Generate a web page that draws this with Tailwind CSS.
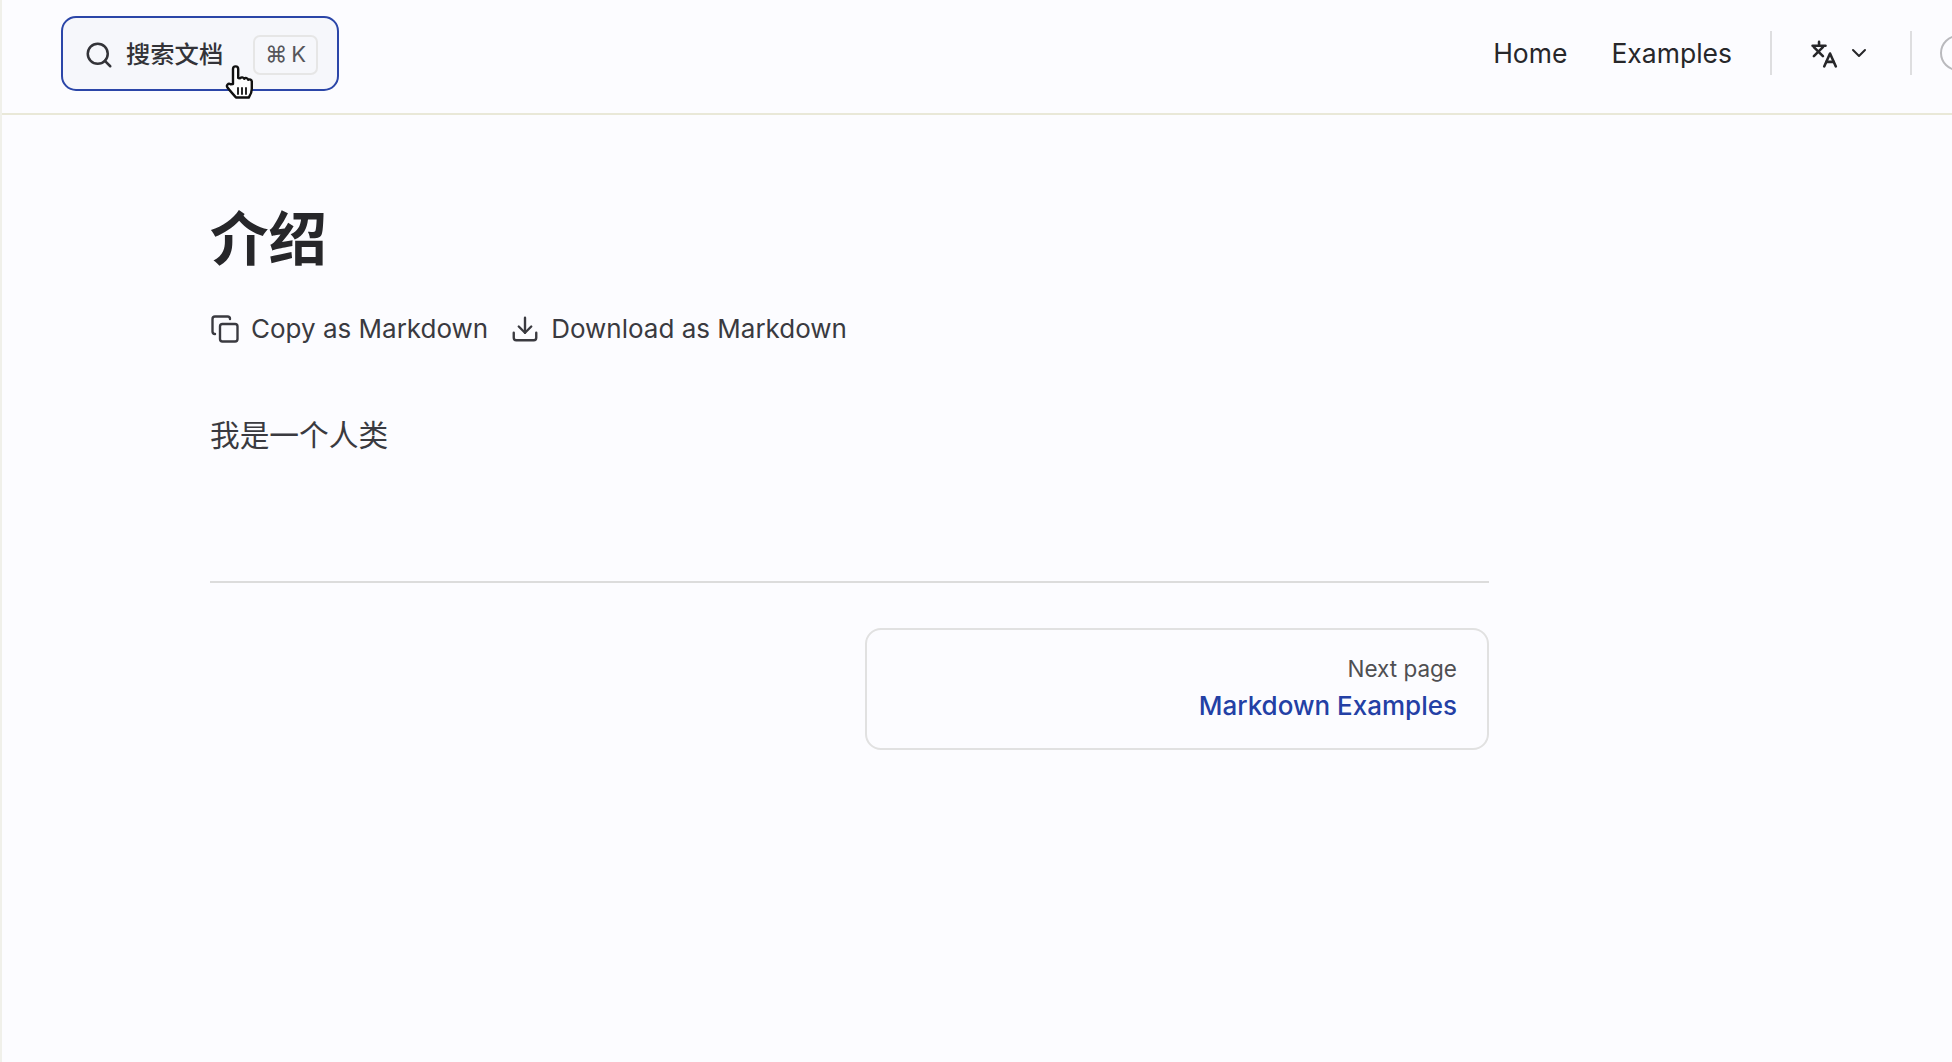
<!DOCTYPE html>
<html lang="en">

<head>
  <meta charset="UTF-8">
  <title>介绍</title>
  <script src="https://cdn.jsdelivr.net/npm/@tailwindcss/browser@4"></script>
</head>

<body class="h-screen overflow-hidden bg-[#fcfcff] text-[#27272a] font-['Inter','Noto_Sans_CJK_SC',sans-serif]">
  <div class="h-full border-l-2 border-[#f0f0ea]">
    <!-- Header -->
    <header class="h-[115px] border-b-2 border-[#e9e8d8] flex items-start justify-between overflow-hidden">
      <div class="relative ml-[59px] mt-4">
        <button class="w-[278px] h-[75px] flex items-center pl-[21px] border-2 border-[#2b46a8] rounded-[15px] bg-[#f6f7fb]">
          <svg class="w-[30px] h-[30px] mt-0.5 text-[#333338]" viewBox="0 0 24 24" fill="none" stroke="currentColor" stroke-width="2" stroke-linecap="round" stroke-linejoin="round"><circle cx="11" cy="11" r="8"></circle><path d="m21 21-4.3-4.3"></path></svg>
          <span class="ml-[12px] mt-0.5 text-[24.3px] font-medium leading-none text-[#333338]">搜索文档</span>
          <kbd class="ml-[30px] mt-0.5 w-[65px] h-[40px] flex items-center justify-center gap-[4px] border-2 border-[#e6e6e6] rounded-[7px] text-[22px] font-['Inter',sans-serif] text-[#55555a]">⌘<span>K</span></kbd>
        </button>
        <!-- pointer hand -->
        <svg class="absolute left-[163px] top-[48px] w-[30px] h-[36px]" viewBox="0 0 30 36" fill="#fff" stroke="#111" stroke-width="2.4" stroke-linejoin="round" stroke-linecap="round"><path d="M9 20 V5 a2.6 2.6 0 0 1 5.2 0 V14 l2 .2 a2.4 2.4 0 0 1 4 .6 a2.3 2.3 0 0 1 4 1 a2.3 2.3 0 0 1 3.6 1.6 V25 c0 4-2 7-3 8.5 H12 C10 31 6 27 3.5 23.5 c-1.6-2.4 .8-4.6 3-3.2 Z"></path><path d="M14 24v6M18 24v6M22 24v6" stroke-width="1.8" fill="none"></path></svg>
      </div>
      <nav class="flex items-center h-[106px] text-[26.5px] leading-none">
        <a class="mr-[44px]">Home</a>
        <a class="mr-[38px]">Examples</a>
        <div class="w-0.5 h-[44px] bg-[#dedee0]"></div>
        <button class="ml-[38px] mr-[39px] flex items-center text-[#27272a]">
          <svg class="w-[31px] h-[31px]" viewBox="0 0 24 24" fill="none" stroke="currentColor" stroke-width="2" stroke-linecap="round" stroke-linejoin="round"><path d="M2 6h10"></path><path d="M7 3v3"></path><path d="m3 7 7 7"></path><path d="m10 7-7 7"></path><path d="m11 22 4.5-10 4.5 10"></path><path d="M12.8 18.5h5.4"></path></svg>
          <svg class="ml-[6px] w-[24px] h-[24px]" viewBox="0 0 24 24" fill="none" stroke="currentColor" stroke-width="2" stroke-linecap="round" stroke-linejoin="round"><path d="m6 9 6 6 6-6"></path></svg>
        </button>
        <div class="w-0.5 h-[44px] bg-[#dedee0]"></div>
        <div class="ml-[28px] mr-[-24px] w-[36px] h-[36px] rounded-full border-2 border-[#b9b9bd]"></div>
      </nav>
    </header>

    <!-- Content -->
    <main class="ml-[208px] w-[1279px]">
      <h1 class="mt-[82px] text-[58.5px] leading-[84px] font-bold">介绍</h1>
      <div class="mt-[28px] flex items-center gap-[22px] text-[26px] leading-[40px] text-[#3a3a40]">
        <button class="flex items-center gap-[11px]">
          <svg class="w-[30px] h-[30px]" viewBox="0 0 24 24" fill="none" stroke="currentColor" stroke-width="1.9" stroke-linecap="round" stroke-linejoin="round"><rect x="8" y="8" width="14" height="14" rx="2"></rect><path d="M4 16c-1.1 0-2-.9-2-2V4c0-1.1.9-2 2-2h10c1.1 0 2 .9 2 2"></path></svg>
          <span>Copy as Markdown</span>
        </button>
        <button class="flex items-center gap-[11px]">
          <svg class="w-[30px] h-[30px]" viewBox="0 0 24 24" fill="none" stroke="currentColor" stroke-width="1.9" stroke-linecap="round" stroke-linejoin="round"><path d="M21 15v4a2 2 0 0 1-2 2H5a2 2 0 0 1-2-2v-4"></path><path d="m7 10 5 5 5-5"></path><path d="M12 15V3"></path></svg>
          <span>Download as Markdown</span>
        </button>
      </div>
      <p class="mt-[64px] text-[29.7px] leading-[44px] text-[#3a3a40]">我是一个人类</p>
      <div class="mt-[124px] border-t-2 border-[#dcdcdc]"></div>
      <div class="mt-[45px] flex justify-end">
        <a class="w-[624px] h-[122px] flex flex-col items-end pt-[21px] pr-[30px] border-2 border-[#e1e1e1] rounded-[16px]">
          <span class="text-[22.5px] leading-[35px] text-[#4f4f52]">Next page</span>
          <span class="text-[26px] leading-[40px] font-medium text-[#2340a5]">Markdown Examples</span>
        </a>
      </div>
    </main>
  </div>
</body>

</html>
